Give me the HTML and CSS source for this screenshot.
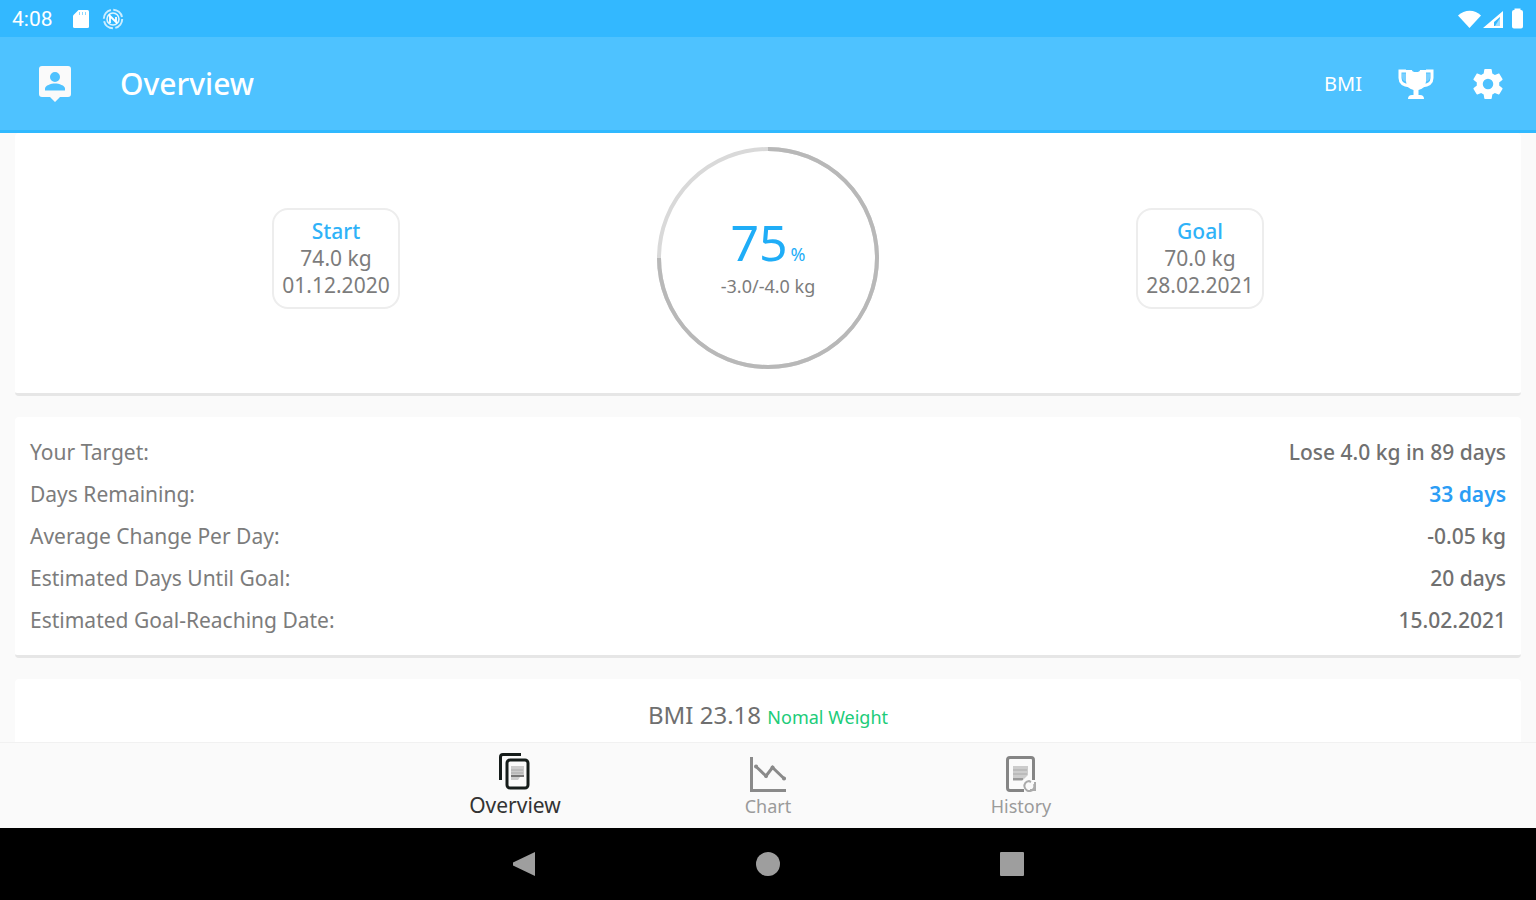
FILE: index.html
```html
<!DOCTYPE html>
<html lang="en">
<head>
<meta charset="utf-8">
<meta name="viewport" content="width=device-width, initial-scale=1">
<title>Overview</title>
<link rel="stylesheet" href="styles.css">
</head>
<body>
<div class="status-bar">
  <time class="clock">4:08</time>
  <svg class="sd" viewBox="0 0 16 20" aria-hidden="true"><path d="M5.500 1H14.500Q16 1 16 2.500V17.500Q16 19 14.500 19H1.500Q0 19 0 17.500V6.500Z" fill="#fff"/><path d="M6.500 3v3M9.500 3v3M12.500 3v3" stroke="#8dd7ff" stroke-width="1"/></svg>
  <svg class="sync" viewBox="0 0 22 22" fill="none" stroke="#fff" aria-hidden="true"><circle cx="11" cy="11" r="9.200" stroke-width="2" stroke-opacity=".75" stroke-dasharray="12 2.450"/><circle cx="11" cy="11" r="6" stroke-width="1.600" stroke-opacity=".85"/><path d="M8 15V8l6 6V9M7 7l8 8" stroke-width="1.800"/></svg>
  <svg class="signals" viewBox="0 0 68 24" aria-hidden="true"><path d="M0 8.500C6.500 2 17 2 23 8.500L11.500 21Z" fill="#fff"/><path fill-rule="evenodd" d="M25 21 45 4V21ZM36 19h6V10l-6 5Z" fill="#fff"/><path d="M37 19h5v-8Z" fill="#9bdcff"/><path d="M56.500 3V1.500h6V3H63q2 0 2 2v14.500q0 2-2 2h-7q-2 0-2-2V5q0-2 2-2Z" fill="#fff"/></svg>
</div>
<header class="app-bar">
  <button class="icon-button" aria-label="Profile"><svg class="profile" viewBox="0 0 34 38"><path fill="#fafafa" fill-rule="evenodd" d="M4 1H30Q33 1 33 4V29Q33 32 30 32H22L17 37L12 32H4Q1 32 1 29V4Q1 1 4 1ZM17 7A5 5 0 1 0 17 17A5 5 0 1 0 17 7ZM7 25.500H27V23.500C27 20.500 21 18.500 17 18.500S7 20.500 7 23.500Z"/></svg></button>
  <h1 class="title">Overview</h1>
  <button class="bmi-button">BMI</button>
  <button class="icon-button" aria-label="Goals"><svg class="trophy" viewBox="0 0 36 32"><path d="M8 3H2V10Q2 17 12 18M28 3H34V10Q34 17 24 18" fill="none" stroke="#fff" stroke-width="3"/><path d="M4 5.500H9.500V14Q4 13 4 9Z M32 5.500H26.500V14Q32 13 32 9Z" fill="#7bd0ff"/><path d="M8 2h6q0 2 4 2t4-2h6V13Q28 20 20.500 22V27H22q4 0 4 4H10q0-4 4-4h1.500V22Q8 20 8 13Z" fill="#fff"/></svg></button>
  <button class="icon-button" aria-label="Settings"><svg class="gear" viewBox="2 2 20 20"><path fill="#fff" d="M19.430 12.980c.04-.32.07-.64.07-.98s-.03-.66-.07-.98l2.110-1.650c.19-.15.24-.42.12-.64l-2-3.460c-.12-.22-.39-.3-.61-.22l-2.490 1c-.52-.4-1.080-.73-1.690-.98l-.38-2.650C14.460 2.180 14.250 2 14 2h-4c-.25 0-.46.18-.49.42l-.38 2.650c-.61.25-1.170.59-1.690.98l-2.490-1c-.23-.09-.49 0-.61.22l-2 3.460c-.13.22-.07.49.12.64l2.110 1.650c-.04.32-.07.65-.07.98s.03.66.07.98l-2.110 1.650c-.19.15-.24.42-.12.64l2 3.460c.12.22.39.3.61.22l2.490-1c.52.4 1.080.73 1.690.98l.38 2.650c.03.24.24.42.49.42h4c.25 0 .46-.18.49-.42l.38-2.650c.61-.25 1.170-.59 1.690-.98l2.490 1c.23.09.49 0 .61-.22l2-3.460c.12-.22.07-.49-.12-.64zM12 15.500A3.500 3.500 0 1 1 12 8.500a3.500 3.500 0 0 1 0 7z"/></svg></button>
</header>
<main class="content">
  <section class="card progress">
    <div class="milestone"><h2 class="milestone-title">Start</h2><p>74.0 kg</p><p>01.12.2020</p></div>
    <div class="ring">
      <svg class="ring-track" viewBox="0 0 222 222" fill="none" stroke-width="4" aria-hidden="true"><circle cx="111" cy="111" r="109" stroke="#d9d9d9"/><path d="M111 2A109 109 0 1 1 2 111" stroke="#b8b8b8"/></svg>
      <div class="ring-label"><p class="percent">75<span class="percent-sign">%</span></p><p class="change">-3.0/-4.0 kg</p></div>
    </div>
    <div class="milestone"><h2 class="milestone-title">Goal</h2><p>70.0 kg</p><p>28.02.2021</p></div>
  </section>
  <section class="card details">
    <table class="stats">
      <tbody>
        <tr><th scope="row">Your Target:</th><td>Lose 4.0 kg in 89 days</td></tr>
        <tr><th scope="row">Days Remaining:</th><td class="accent">33 days</td></tr>
        <tr><th scope="row">Average Change Per Day:</th><td>-0.05 kg</td></tr>
        <tr><th scope="row">Estimated Days Until Goal:</th><td>20 days</td></tr>
        <tr><th scope="row">Estimated Goal-Reaching Date:</th><td>15.02.2021</td></tr>
      </tbody>
    </table>
  </section>
  <section class="card bmi">BMI 23.18 <span class="bmi-class">Nomal Weight</span></section>
</main>
<nav class="tabs">
  <a class="tab active" href="#overview" aria-current="page"><svg class="tab-icon" viewBox="0 0 38 38" fill="none" stroke="#151c1a" stroke-width="3" aria-hidden="true"><path d="M25 2.500H7Q4.500 2.500 4.500 5V28"/><rect x="11" y="8" width="21" height="28" rx="3"/><path d="M15 14h13v11h-4l-2 3h-7Z" fill="#ccc" stroke="none"/><path d="M15 18h12M15 21h12" stroke="#aaa" stroke-width="1"/><path d="M15 24h13" stroke="#777" stroke-width="2"/></svg>Overview</a>
  <a class="tab" href="#chart"><svg class="tab-icon" viewBox="0 0 38 38" fill="none" stroke="#8a8a8a" stroke-width="3" aria-hidden="true"><path d="M2.500 2V35.500H37"/><path d="M7 11.500 17 21 23.500 12.500 35 23.500"/><path d="M7 11.500h.1M17 21h.1M23.500 12.500h.1M35 23.500h.1" stroke-width="4" stroke-linecap="round"/></svg>Chart</a>
  <a class="tab" href="#history"><svg class="tab-icon" viewBox="0 0 38 38" fill="none" stroke="#858585" stroke-width="3" aria-hidden="true"><path d="M22 35.500H8Q5.500 35.500 5.500 33V5Q5.500 2.500 8 2.500H29Q31.500 2.500 31.500 5V25"/><path d="M11 11h15v9l-6 6h-9Z" fill="#ccc" stroke="none"/><path d="M11 15h14M11 19h14" stroke="#aaa" stroke-width="1"/><path d="M11 24h10" stroke="#999" stroke-width="2"/><path d="M32 29A5 5 0 1 1 27 26l2 1M28 35h5v-8" stroke="#aaa" stroke-width="2"/></svg>History</a>
</nav>
<div class="system-nav">
  <button class="system-button" aria-label="Back"><svg viewBox="0 0 24 24"><path d="M23 0V24L1 13.500V10.500Z"/></svg></button>
  <button class="system-button" aria-label="Home"><svg viewBox="0 0 24 24"><circle cx="12" cy="12" r="12"/></svg></button>
  <button class="system-button" aria-label="Recent apps"><svg viewBox="0 0 24 24"><rect width="24" height="24" rx="1"/></svg></button>
</div>
</body>
</html>
```
FILE: styles.css
```css
* { box-sizing: border-box; }
body {
  margin: 0;
  height: 100vh;
  display: flex;
  flex-direction: column;
  overflow: hidden;
  background: #fafafa;
  color: #7c7c7c;
  font: 21px/27px "Noto Sans", sans-serif;
}
h1, h2, p { margin: 0; font-weight: 400; }
svg { display: block; }
button { border: 0; padding: 0; background: none; color: inherit; font: inherit; }
.status-bar {
  display: flex;
  align-items: center;
  height: 37px;
  flex: none;
  padding: 0 10px 0 12px;
  background: #33b8ff;
  color: #fff;
}
.clock { font: 21px/24px Roboto, sans-serif; }
.sd { width: 16px; height: 20px; margin-left: 20px; }
.sync { width: 22px; height: 22px; margin-left: 13px; }
.signals { width: 68px; height: 24px; margin-left: auto; }
.app-bar {
  display: flex;
  align-items: center;
  flex: none;
  height: 96px;
  padding: 0 33px 0 38px;
  background: #4ec2ff;
  border-bottom: 3px solid #30b9ff;
  color: #fff;
}
.profile { width: 34px; height: 38px; }
.title { flex: 1; margin-left: 48px; font-size: 30px; line-height: 40px; font-weight: 500; }
.bmi-button { font-size: 20px; margin-right: 36px; }
.trophy { width: 36px; height: 32px; }
.gear { width: 30px; height: 30px; margin-left: 39px; }
.content {
  flex: 1;
  min-height: 0;
  overflow: hidden;
  display: flex;
  flex-direction: column;
  gap: 21px;
  padding: 0 15px;
}
.card {
  flex: none;
  background: #fff;
  border-radius: 4px;
  border-bottom: 3px solid #e6e6e6;
}
.progress {
  display: flex;
  justify-content: space-evenly;
  align-items: center;
  padding: 14px 0 24px;
}
.milestone {
  padding: 8px;
  border: 2px solid #ededed;
  border-radius: 16px;
  text-align: center;
}
.milestone-title { font-size: 21px; line-height: 27px; color: #2fb2f8; font-weight: 500; }
.ring { display: grid; width: 222px; }
.ring-track, .ring-label { grid-area: 1 / 1; }
.ring-label { align-self: center; text-align: center; padding-bottom: 6px; }
.percent { font-size: 50px; line-height: 62px; color: #1fadf7; }
.percent-sign { font-size: 18px; line-height: 18px; margin-left: 3px; }
.change { font-size: 18px; }
.details { padding: 14px 15px; }
.stats { width: 100%; border-collapse: collapse; line-height: 42px; }
.stats th { padding: 0; text-align: left; font-weight: 400; }
.stats td { padding: 0; text-align: right; font-weight: 500; color: #707070; }
.stats .accent { color: #2b9df5; font-weight: 600; }
.bmi { padding: 19px 0; line-height: 33px; font-size: 24px; text-align: center; color: #6f6f6f; }
.bmi-class { font-size: 18px; color: #20cc79; }
.tabs {
  display: flex;
  justify-content: center;
  flex: none;
  height: 86px;
  background: #fafafa;
  border-top: 1px solid #f1f1f1;
}
.tab {
  display: flex;
  flex-direction: column;
  align-items: center;
  flex: 0 1 253px;
  padding-top: 12px;
  color: #9b9b9b;
  font-size: 18px;
  line-height: 27px;
  text-decoration: none;
}
.tab.active { padding-top: 9px; font-size: 21px; line-height: 30px; color: #333; }
.tab-icon { width: 38px; height: 38px; }
.system-nav {
  display: flex;
  justify-content: center;
  flex: none;
  height: 72px;
  background: #000;
}
.system-button { flex: 0 1 244px; display: grid; place-items: center; }
.system-button svg { width: 24px; height: 24px; fill: #9e9e9e; }
```
